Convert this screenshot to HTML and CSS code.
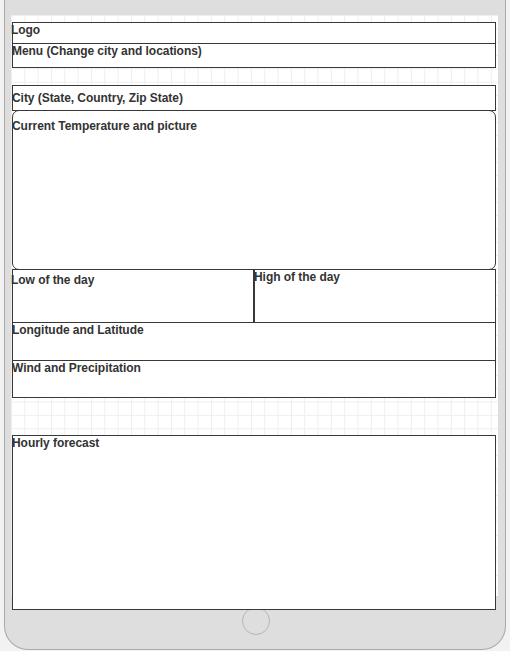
FILE: index.html
```html
<!DOCTYPE html>
<html>
<head>
<meta charset="utf-8">
<link rel="stylesheet" href="styles.css">
</head>
<body>
<div class="device">
  <div class="screen">
    <div class="box box-logo"><span class="label label-logo">Logo</span></div>
    <div class="box box-menu"><span class="label label-menu">Menu (Change city and locations)</span></div>
    <div class="box box-city"><span class="label label-city">City (State, Country, Zip State)</span></div>
    <div class="box box-temp"><span class="label label-temp">Current Temperature and picture</span></div>
    <div class="row">
      <div class="box box-low"><span class="label label-low">Low of the day</span></div>
      <div class="box box-high"><span class="label label-high">High of the day</span></div>
    </div>
    <div class="box box-geo"><span class="label label-geo">Longitude and Latitude</span></div>
    <div class="box box-wind"><span class="label label-wind">Wind and Precipitation</span></div>
    <div class="box box-hourly"><span class="label label-hourly">Hourly forecast</span></div>
  </div>
  <div class="home"></div>
</div>
</body>
</html>
```
FILE: styles.css
```css
* { box-sizing: border-box; }
html, body { margin: 0; padding: 0; }
body {
  background: #f2f2f2;
  width: 510px;
  height: 651px;
  overflow: hidden;
  font-family: "Liberation Sans", Arial, sans-serif;
}
.device {
  margin-left: 4px;
  width: 502px;
  height: 650px;
  background: #dedede;
  border: 1px solid #a9a9a9;
  border-top: none;
  border-radius: 0 0 24px 24px;
  padding: 15px 6px 0 6px;
}
.screen {
  width: 487px;
  height: 581px;
  background-color: #fff;
  background-image:
    linear-gradient(to right, #eeeeee 1px, transparent 1px),
    linear-gradient(to bottom, #eeeeee 1px, transparent 1px);
  background-size: 13.33px 13.33px;
  padding: 7px 2px 0 1px;
}
.box {
  background: #fff;
  border: 1px solid #383838;
  width: 484px;
}
.label {
  display: block;
  font-size: 12px;
  font-weight: bold;
  line-height: 14px;
  color: #333;
  white-space: nowrap;
  margin-left: -1px;
  letter-spacing: -0.05px;
}
.box-logo { height: 22px; }
.box-menu { height: 25px; margin-top: -1px; }
.box-city { height: 26px; margin-top: 17px; }
.box-temp { height: 160px; margin-top: -1px; border-radius: 7px; position: relative; }
.row { display: flex; margin-top: -1px; height: 54px; width: 484px; position: relative; }
.box-low { width: 243px; height: 54px; border-right-width: 2px; }
.box-high { flex: 1; width: auto; height: 54px; border-left: none; }
.box-geo { height: 39px; margin-top: -1px; }
.box-wind { height: 38px; margin-top: -1px; }
.box-hourly { height: 175px; margin-top: 37px; position: relative; }

.label-logo { padding-top: 0; margin-left: -2px; }
.label-menu { padding-top: 0; }
.label-city { padding-top: 5px; }
.label-temp { padding-top: 8px; }
.label-low { padding-top: 3px; margin-left: -2px; }
.label-high { padding-top: 0; margin-left: -1px; }
.label-geo { padding-top: 0; }
.label-wind { padding-top: 0; }
.label-hourly { padding-top: 0; }

.home {
  width: 28px;
  height: 28px;
  margin: 11px 0 0 231px;
  border: 1px solid #b5b5b5;
  border-radius: 50%;
}
```
